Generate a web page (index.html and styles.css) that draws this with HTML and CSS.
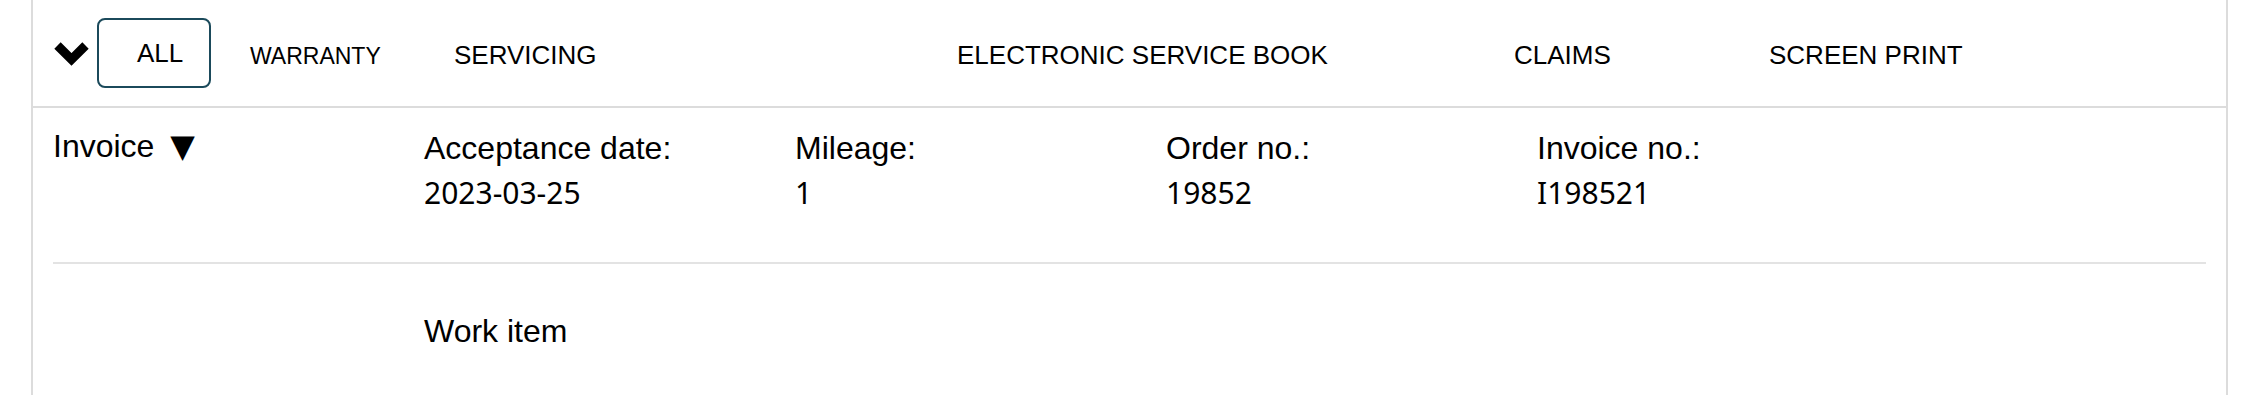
FILE: index.html
```html
<!DOCTYPE html>
<html lang="en">
<head>
    <meta charset="UTF-8">
    <meta name="viewport" content="width=device-width, initial-scale=1.0">
    <title>Vehicle History</title>
    <link rel="stylesheet" href="styles.css">
</head>
<body>
    <div class="panel">
        <header class="toolbar">
            <button class="toggle" aria-label="Collapse">
                <svg width="37" height="26" viewBox="0 0 37 26">
                    <polyline points="4.5,4.5 18.5,18.5 32.5,4.5" fill="none" stroke="#000" stroke-width="9" stroke-linecap="butt" stroke-linejoin="miter"/>
                </svg>
            </button>
            <button class="tab-active">ALL</button>
            <nav class="tabs">
                <a class="tab tab-small" href="#">WARRANTY</a>
                <a class="tab" href="#">SERVICING</a>
                <a class="tab" href="#">ELECTRONIC SERVICE BOOK</a>
                <a class="tab" href="#">CLAIMS</a>
                <a class="tab" href="#">SCREEN PRINT</a>
            </nav>
        </header>

        <section class="invoice">
            <div class="invoice-row">
                <div class="invoice-title">Invoice <span class="caret">▼</span></div>
                <div class="field">
                    <div class="field-label">Acceptance date:</div>
                    <div class="field-value">2023-03-25</div>
                </div>
                <div class="field">
                    <div class="field-label">Mileage:</div>
                    <div class="field-value">1</div>
                </div>
                <div class="field">
                    <div class="field-label">Order no.:</div>
                    <div class="field-value">19852</div>
                </div>
                <div class="field">
                    <div class="field-label">Invoice no.:</div>
                    <div class="field-value">I198521</div>
                </div>
            </div>
            <div class="work-row">
                <div></div>
                <div class="work-title">Work item</div>
            </div>
        </section>
    </div>
</body>
</html>
```

FILE: styles.css
```css
body {
    margin: 0;
    font-family: "Liberation Sans", Arial, sans-serif;
    color: #000;
    background-color: #fff;
}
.panel {
    margin-left: 31px;
    width: 2197px;
    min-height: 100vh;
    box-sizing: border-box;
    border-left: 2px solid #dcdcdc;
    border-right: 2px solid #dcdcdc;
}

/* top bar with the tabs */
.toolbar {
    display: flex;
    align-items: center;
    height: 106px;
    padding-left: 20px;
    border-bottom: 2px solid #dcdcdc;
}
.toggle {
    display: flex;
    width: 37px;
    height: 26px;
    padding: 0;
    margin-right: 7px;
    margin-top: 2px;
    border: none;
    background: none;
    cursor: pointer;
}
.tab-active {
    display: flex;
    align-items: center;
    box-sizing: border-box;
    width: 114px;
    height: 70px;
    padding: 0 0 0 38px;
    border: 2px solid #1b4a5b;
    border-radius: 8px;
    background-color: #fff;
    font-family: inherit;
    font-size: 26px;
    color: #000;
    cursor: pointer;
}
.tabs {
    display: grid;
    grid-template-columns: 204px 503px 557px 255px auto;
    align-items: baseline;
    margin-left: 39px;
    margin-top: 4px;
}
.tab {
    font-size: 26px;
    color: #000;
    text-decoration: none;
}
.tab-small {
    font-size: 23px;
}

/* invoice block */
.invoice {
    padding: 22px 20px 0;
}
.invoice-row,
.work-row {
    display: grid;
    grid-template-columns: repeat(5, 371px);
}
.invoice-row {
    padding-bottom: 51px;
    border-bottom: 2px solid #e3e3e3;
}
.invoice-title,
.field-label,
.work-title {
    font-size: 32px;
    line-height: 36px;
}
.invoice-title {
    margin-top: -2px;
}
.caret {
    font-family: "DejaVu Sans", sans-serif;
    margin-left: 7px;
}
.field-value {
    margin-top: 9px;
    font-family: "Segoe UI", "Noto Sans", sans-serif;
    font-size: 30px;
    line-height: 36px;
}
.work-row {
    padding-top: 49px;
}
```
